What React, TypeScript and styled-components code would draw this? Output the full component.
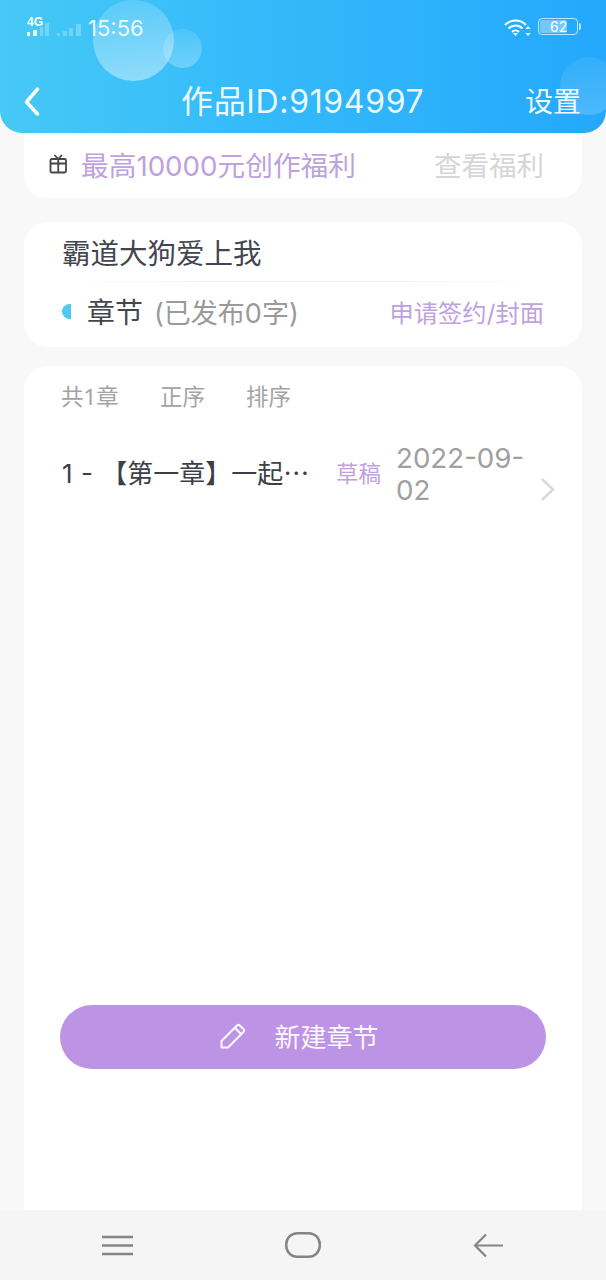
import React from 'react'
import styled, {createGlobalStyle} from 'styled-components'

const GlobalStyle = createGlobalStyle`
  html, body {
    margin: 0;
    padding: 0;
    background: #f8f8f8;
  }
  * {
    box-sizing: border-box;
  }
  body {
    font-family: Inter, "Noto Sans CJK SC", sans-serif;
  }
`

const Page = styled.div`
  width: 606px;
  height: 1280px;
  display: flex;
  flex-direction: column;
  overflow: hidden;
  background: #f8f8f8;
`

const Header = styled.header`
  position: relative;
  height: 133px;
  flex: none;
  overflow: hidden;
  color: #fff;
  border-radius: 0 0 22px 22px;
  background: linear-gradient(90deg, #46c9f6 0%, #35bbfa 40%, #24a8fc 100%);
`

const Bubble = styled.div<{$size: number; $left: number; $top: number; $alpha: number}>`
  position: absolute;
  width: ${p => p.$size}px;
  height: ${p => p.$size}px;
  left: ${p => p.$left}px;
  top: ${p => p.$top}px;
  border-radius: 50%;
  background: linear-gradient(170deg, rgba(255, 255, 255, ${p => p.$alpha * 0.35}), rgba(255, 255, 255, ${p => p.$alpha * 1.2}));
`

const StatusBar = styled.div`
  position: relative;
  height: 56px;
  padding: 15px 28px 0 27px;
  display: flex;
  justify-content: space-between;
  align-items: flex-start;
`

const SignalGroup = styled.div`
  display: flex;
  align-items: flex-start;
`

const SystemGroup = styled.div`
  margin-top: 3px;
  display: flex;
  align-items: center;
`

const Clock = styled.span`
  font-size: 22px;
  line-height: 26px;
  margin-left: 6px;
  color: rgba(255, 255, 255, 0.9);
`

const Battery = styled.div`
  position: relative;
  width: 40px;
  height: 17px;
  margin: -3px 0 0 7px;
  border: 1px solid rgba(255, 255, 255, 0.7);
  border-radius: 4px;
  padding: 1px;
  display: flex;
  &::after {
    content: "";
    position: absolute;
    right: -4px;
    top: 4px;
    width: 2px;
    height: 7px;
    border-radius: 0 2px 2px 0;
    background: rgba(255, 255, 255, 0.7);
  }
`

const BatteryLevel = styled.div`
  flex: 1;
  margin-right: 11px;
  border-radius: 2px;
  background: rgba(255, 255, 255, 0.35);
  font-size: 14px;
  line-height: 13px;
  padding-left: 10px;
  white-space: nowrap;
`

const NavBar = styled.div`
  position: relative;
  height: 77px;
  padding: 14px 25px 0 22px;
  display: flex;
  align-items: center;
`

const Title = styled.h1`
  margin: 0 0 0 139px;
  font-size: 32px;
  line-height: 44px;
  font-weight: 400;
  letter-spacing: 0.65px;
  white-space: nowrap;
  color: rgba(255, 255, 255, 0.92);
`

const SettingText = styled.span`
  margin-left: auto;
  font-size: 28px;
  line-height: 40px;
  color: rgba(255, 255, 255, 0.95);
`

const Main = styled.main`
  flex: 1;
  min-height: 0;
  padding: 0 24px;
  display: flex;
  flex-direction: column;
`

const PromoCard = styled.section`
  height: 65px;
  flex: none;
  padding: 0 38px 3px 25px;
  display: flex;
  align-items: center;
  background: #fff;
  border-radius: 0 0 22px 22px;
`

const PromoText = styled.span`
  margin-left: 13px;
  flex: 1;
  font-size: 27.7px;
  color: #c0a1df;
  white-space: nowrap;
`

const PromoLink = styled.span`
  font-size: 27.5px;
  color: #d6d6d6;
`

const BookCard = styled.section`
  margin-top: 24px;
  height: 125px;
  flex: none;
  padding: 0 38px;
  background: #fff;
  border-radius: 24px;
`

const BookTitle = styled.div`
  height: 60px;
  display: flex;
  align-items: center;
  font-size: 28.5px;
  color: #43464f;
  border-bottom: 1px solid transparent;
  border-image: linear-gradient(90deg, #fff, #f1f1f1 30%, #f1f1f1 70%, #fff) 1;
`

const ChapterRow = styled.div`
  height: 58px;
  display: flex;
  align-items: center;
`

const Dot = styled.i`
  width: 9px;
  height: 15px;
  border-radius: 9px 0 0 9px;
  background: #4fc9ee;
  margin-right: 16px;
`

const ChapterLabel = styled.span`
  font-size: 28px;
  color: #43464f;
`

const ChapterCount = styled.span`
  margin-left: 11px;
  flex: 1;
  font-size: 27px;
  color: #9a9a9a;
`

const SignLink = styled.span`
  font-size: 24.3px;
  color: #c0a1df;
`

const ListCard = styled.section`
  margin-top: 19px;
  flex: 1;
  min-height: 0;
  display: flex;
  flex-direction: column;
  background: #fff;
  border-radius: 24px 24px 0 0;
`

const ListTools = styled.div`
  display: flex;
  gap: 41px;
  padding: 14px 38px 0 37px;
  font-family: "Noto Sans", "Noto Sans CJK SC", sans-serif;
  font-size: 22.5px;
  line-height: 33px;
  color: #a3a3a3;
`

const ChapterItem = styled.div`
  margin-top: 24px;
  padding: 0 26px 0 38px;
  display: flex;
  align-items: center;
`

const ChapterName = styled.span`
  width: 247px;
  flex: none;
  font-size: 26px;
  word-spacing: 1px;
  color: #3c3f47;
  white-space: nowrap;
`

const DraftTag = styled.span`
  margin-left: 27px;
  flex: none;
  font-size: 22.5px;
  color: #c0a1df;
`

const ChapterDate = styled.span`
  width: 136px;
  flex: none;
  margin: 5px 0 0 15px;
  font-size: 27.7px;
  line-height: 32px;
  color: #a0a0a0;
`

const ChevronBox = styled.span`
  margin-left: auto;
  margin-top: 36px;
  display: flex;
`

const NewButton = styled.button`
  margin: auto 36px 141px;
  height: 64px;
  flex: none;
  border: 0;
  border-radius: 32px;
  padding: 0 7px 3px 0;
  background: #bd94e5;
  color: rgba(255, 255, 255, 0.95);
  display: flex;
  align-items: center;
  justify-content: center;
  gap: 28px;
  font-family: inherit;
  font-size: 26px;
`

const BottomNav = styled.nav`
  height: 70px;
  flex: none;
  padding: 0 103px 0 102px;
  display: flex;
  align-items: center;
  justify-content: space-between;
  background: #f5f5f5;
`

const Signal = () => (
  <svg width="55" height="32" viewBox="0 0 55 32">
    <text x="0" y="11" fontFamily="Liberation Sans" fontWeight="700" fontSize="12" fill="#fff">4G</text>
    <rect x="0" y="17" width="3" height="4" fill="#fff"/>
    <rect x="6" y="15" width="4" height="6" fill="#fff" fillOpacity=".85"/>
    <rect x="13" y="12" width="3" height="9" fill="#fff" fillOpacity=".25"/>
    <rect x="18" y="8" width="4" height="13" fill="#fff" fillOpacity=".25"/>
    <rect x="30" y="18" width="3" height="3" fill="#fff" fillOpacity=".25"/>
    <rect x="36" y="16" width="4" height="5" fill="#fff" fillOpacity=".25"/>
    <rect x="42" y="13" width="4" height="8" fill="#fff" fillOpacity=".25"/>
    <rect x="49" y="9" width="5" height="12" fill="#fff" fillOpacity=".25"/>
  </svg>
)

const Wifi = () => (
  <svg width="27" height="20" viewBox="0 0 27 20" fill="none" stroke="#fff" strokeWidth="2">
    <path d="M1 7c6-6 15-6 21 0"/>
    <path d="M4.500 10.500c4-4 10-4 14 0"/>
    <path d="M8 14c2-2 5-2 7 0"/>
    <path d="M9 15l2.500 3 2.500-3z" fill="#fff" stroke="none"/>
    <path d="M24 8l2.500 3h-5zM24 18l2.500-3h-5z" fill="#fff" stroke="none"/>
  </svg>
)

const BackIcon = () => (
  <svg width="20" height="32" viewBox="0 0 20 32" fill="none" stroke="#fff" strokeWidth="3.500" strokeLinecap="round" strokeLinejoin="round">
    <path d="M15.500 3L4.500 16l11 12"/>
  </svg>
)

const GiftIcon = () => (
  <svg width="19" height="20" viewBox="0 0 19 20" fill="none" stroke="#45454b" strokeWidth="1.800">
    <rect x="1.500" y="5" width="15.500" height="13.500" rx="1.500"/>
    <path d="M1.500 9.500h15.500M9.250 5v13.500M5.500 1l3.750 4 3.750-4"/>
  </svg>
)

const Chevron = () => (
  <svg width="16" height="25" viewBox="0 0 16 25" fill="none" stroke="#d9d9d9" strokeWidth="2.500">
    <path d="M2 2l11 10.500L2 23"/>
  </svg>
)

const Pencil = () => (
  <svg width="26" height="26" viewBox="0 0 26 26" fill="none" stroke="#fff" strokeWidth="1.900" strokeLinejoin="round">
    <path d="M1.500 24.500v-6.500L17 2.500a2 2 0 0 1 2.800 0l3.700 3.700a2 2 0 0 1 0 2.800L8 24.500z"/>
    <path d="M15 5l6 6"/>
  </svg>
)

const MenuIcon = () => (
  <svg width="31" height="21" viewBox="0 0 31 21" fill="none" stroke="#858585" strokeWidth="2.500">
    <path d="M0 2h31M0 10.500h31M0 19h31"/>
  </svg>
)

const HomeIcon = () => (
  <svg width="36" height="26" viewBox="0 0 36 26" fill="none" stroke="#858585" strokeWidth="2.500">
    <rect x="1.250" y="1.250" width="33.500" height="23.500" rx="11"/>
  </svg>
)

const ReturnIcon = () => (
  <svg width="30" height="25" viewBox="0 0 30 25" fill="none" stroke="#858585" strokeWidth="2.200">
    <path d="M30 12.500H2M13 1.500L2 12.500l11 11"/>
  </svg>
)

const App = () => {
  return (
    <Page>
      <GlobalStyle/>
      <Header>
        <Bubble $size={81} $left={93} $top={0} $alpha={0.38}/>
        <Bubble $size={39} $left={163} $top={29} $alpha={0.24}/>
        <Bubble $size={58} $left={560} $top={57} $alpha={0.16}/>
        <StatusBar>
          <SignalGroup>
            <Signal/>
            <Clock>15:56</Clock>
          </SignalGroup>
          <SystemGroup>
            <Wifi/>
            <Battery>
              <BatteryLevel>62</BatteryLevel>
            </Battery>
          </SystemGroup>
        </StatusBar>
        <NavBar>
          <BackIcon/>
          <Title>作品ID:9194997</Title>
          <SettingText>设置</SettingText>
        </NavBar>
      </Header>
      <Main>
        <PromoCard>
          <GiftIcon/>
          <PromoText>最高10000元创作福利</PromoText>
          <PromoLink>查看福利</PromoLink>
        </PromoCard>
        <BookCard>
          <BookTitle>霸道大狗爱上我</BookTitle>
          <ChapterRow>
            <Dot/>
            <ChapterLabel>章节</ChapterLabel>
            <ChapterCount>(已发布0字)</ChapterCount>
            <SignLink>申请签约/封面</SignLink>
          </ChapterRow>
        </BookCard>
        <ListCard>
          <ListTools>
            <span>共1章</span>
            <span>正序</span>
            <span>排序</span>
          </ListTools>
          <ChapterItem>
            <ChapterName>1 - 【第一章】一起⋯</ChapterName>
            <DraftTag>草稿</DraftTag>
            <ChapterDate>2022-09-02</ChapterDate>
            <ChevronBox><Chevron/></ChevronBox>
          </ChapterItem>
          <NewButton>
            <Pencil/>
            新建章节
          </NewButton>
        </ListCard>
      </Main>
      <BottomNav>
        <MenuIcon/>
        <HomeIcon/>
        <ReturnIcon/>
      </BottomNav>
    </Page>
  )
}

export default App
